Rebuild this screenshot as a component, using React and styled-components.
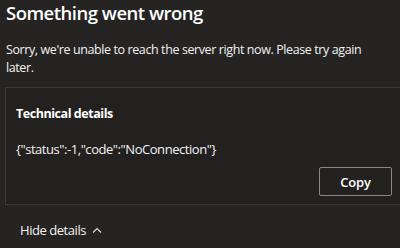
import styled, { createGlobalStyle } from "styled-components";

const GlobalStyle = createGlobalStyle`
    html, body {
        margin: 0;
        padding: 0;
        background-color: #252423;
        overflow: hidden;
    }

    body {
        font-family: "Open Sans", "Noto Sans", sans-serif;
        color: #ffffff;
    }
`

function App() {
    return (
        <>
            <GlobalStyle />
            <Page>
                <Title>Something went wrong</Title>

                <Message>
                    Sorry, we're unable to reach the server right now. Please try again later.
                </Message>

                <DetailsBox>
                    <DetailsTitle>Technical details</DetailsTitle>
                    <Code>{'{"status":-1,"code":"NoConnection"}'}</Code>
                    <Actions>
                        <CopyButton>Copy</CopyButton>
                    </Actions>
                </DetailsBox>

                <Toggle>
                    Hide details
                    <svg width="10" height="6" viewBox="0 0 10 6" fill="none">
                        <polyline points="1,5.5 5,1.5 9,5.5" stroke="#e0dfdd" strokeWidth="1.1" />
                    </svg>
                </Toggle>
            </Page>
        </>
    )
}

export default App;

const Page = styled.div`

    width: 400px;
    height: 248px;
    padding: 0 0 0 5px;
    box-sizing: border-box;

`

const Title = styled.h1`

    margin: 0;
    padding-left: 1px;
    font-size: 18.5px;
    font-weight: 600;
    line-height: 25px;
    letter-spacing: -0.5px;
    color: #ffffff;

`

const Message = styled.p`

    margin: 16px 0 0 0;
    padding-left: 1px;
    width: 385px;
    font-size: 12.5px;
    line-height: 18px;
    letter-spacing: -0.4px;
    color: #f3f2f1;

`

const DetailsBox = styled.div`

    margin-top: 10px;
    width: 403px;
    box-sizing: border-box;
    border: 1px solid #3b3a39;
    padding: 16px 15px 8px 10px;
    background-color: #222120;

`

const DetailsTitle = styled.div`

    font-size: 12.5px;
    font-weight: 700;
    line-height: 20px;
    letter-spacing: -0.45px;
    color: #ffffff;

`

const Code = styled.div`

    margin-top: 15px;
    font-size: 13px;
    line-height: 20px;
    letter-spacing: -0.45px;
    color: #f3f2f1;

`

const Actions = styled.div`

    margin-top: 8px;
    display: flex;
    justify-content: flex-end;

`

const CopyButton = styled.button`

    width: 73px;
    height: 29px;
    background-color: transparent;
    border: 1px solid #8a8886;
    border-radius: 2px;
    color: #ffffff;
    font-family: "Open Sans", "Noto Sans", sans-serif;
    font-size: 13px;
    font-weight: 600;
    letter-spacing: -0.2px;
    cursor: pointer;

`

const Toggle = styled.div`

    margin-top: 15px;
    padding-left: 15px;
    display: flex;
    align-items: center;
    gap: 6px;
    font-size: 13px;
    line-height: 20px;
    letter-spacing: -0.45px;
    color: #f3f2f1;

`
